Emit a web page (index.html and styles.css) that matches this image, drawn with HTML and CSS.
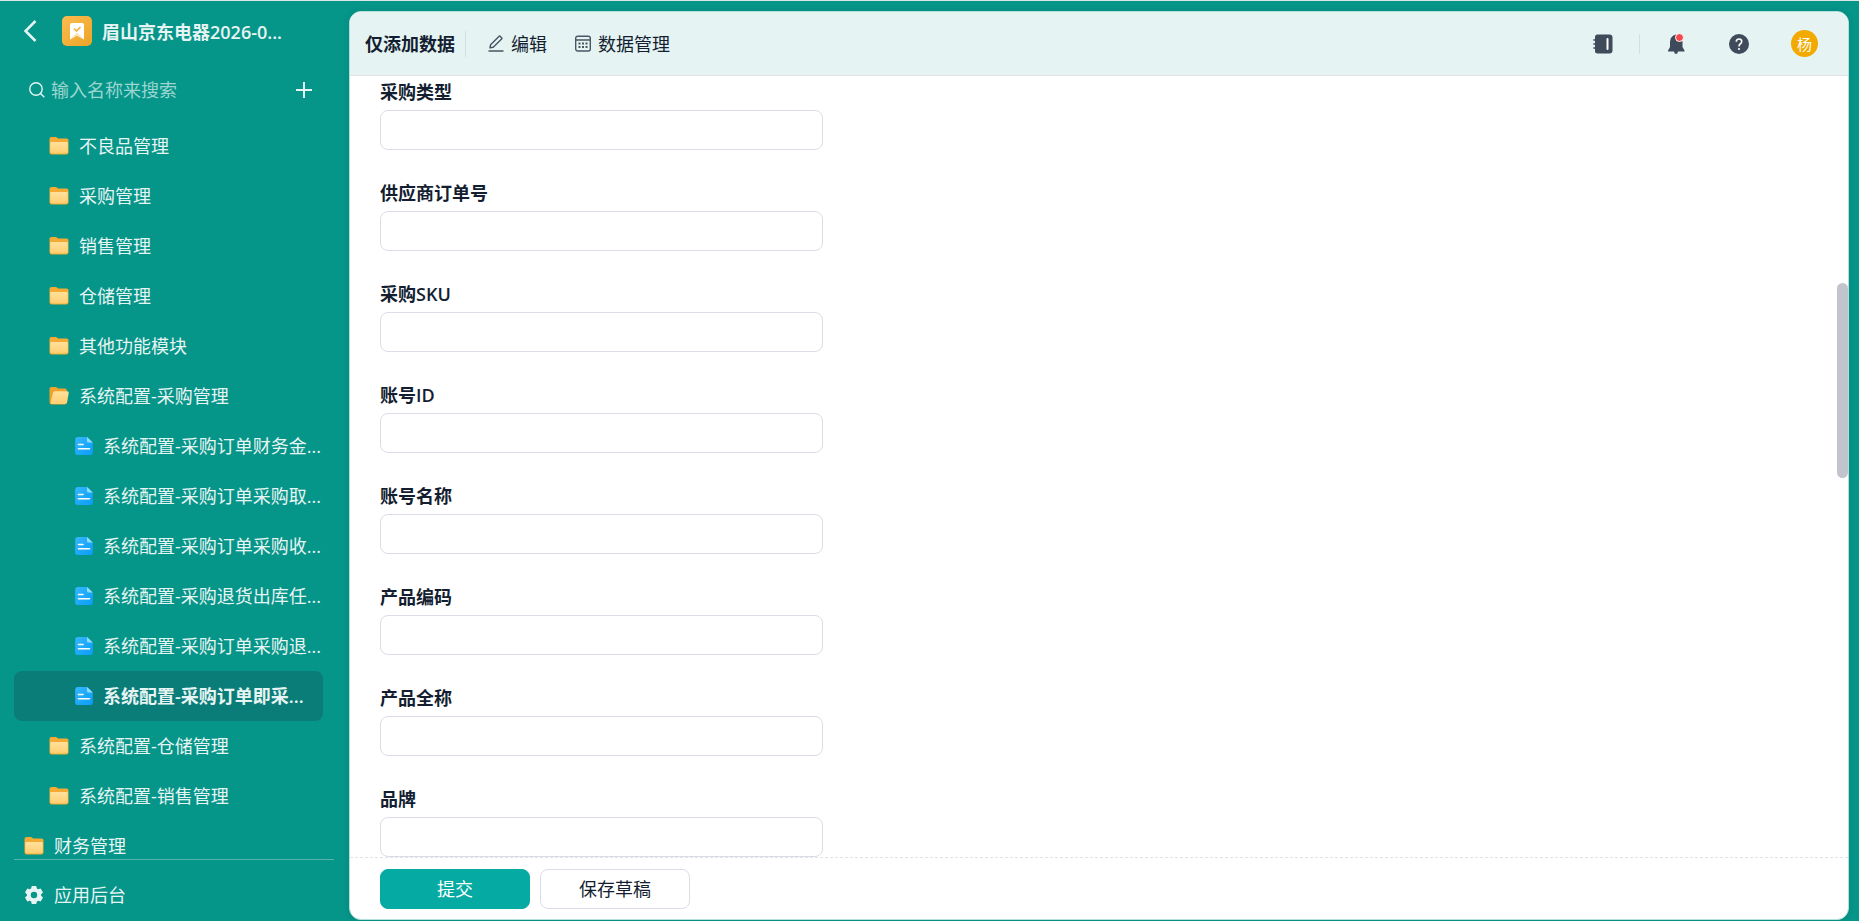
FILE: index.html
```html
<!DOCTYPE html>
<html lang="zh-CN">
<head>
  <meta charset="UTF-8" />
  <meta name="viewport" content="width=device-width, initial-scale=1" />
  <title>眉山京东电器</title>
  <link rel="stylesheet" href="styles.css">
</head>
<body>

  <!-- icons used more than once -->
  <svg class="defs" aria-hidden="true">
    <defs>
      <linearGradient id="folderFill" x1="0" y1="0" x2="0" y2="1">
        <stop offset="0" stop-color="#ffe19c" />
        <stop offset="1" stop-color="#ffcf70" />
      </linearGradient>
      <linearGradient id="docFill" x1="0" y1="0" x2="1" y2="1">
        <stop offset="0" stop-color="#35b8ff" />
        <stop offset="1" stop-color="#0a9cf5" />
      </linearGradient>
      <linearGradient id="logoFill" x1="0" y1="0" x2="1" y2="1">
        <stop offset="0" stop-color="#fbbc4f" />
        <stop offset="1" stop-color="#eca427" />
      </linearGradient>
    </defs>
    <symbol id="folder" viewBox="0 0 20 20">
      <path d="M.5 3Q.5 1 2.5 1H6.500Q7.500 1 8.200 1.700L9.200 2.500H17.500Q19.500 2.500 19.500 4.500V16Q19.500 18.500 17 18.500H3Q.5 18.500 .5 16Z" fill="#f5ab33" />
      <path d="M1.200 7Q1.200 6 2.200 6H17.800Q18.800 6 18.800 7V15.500Q18.800 17.500 16.800 17.500H3.200Q1.200 17.500 1.200 15.500Z" fill="url(#folderFill)" />
    </symbol>
    <symbol id="folder-open" viewBox="0 0 20 20">
      <path d="M.5 3Q.5 1 2.500 1H6.500Q7.500 1 8.200 1.700L9.200 2.500H16Q18 2.500 18 5V17L16 18.500H3Q.5 18.500 .5 16Z" fill="#f0a32c" />
      <path d="M4 7Q4.400 5.200 6 5.200H18.200Q20 5.200 19.700 7L18.200 15.800Q17.800 18 15.500 18H3Q1.200 18 1.700 16Z" fill="url(#folderFill)" />
    </symbol>
    <symbol id="doc" viewBox="0 0 18 20">
      <path d="M2.500 1H12L17.800 6.500V16.500Q17.800 19 15.500 19H2.500Q.2 19 .2 16.500V3.500Q.2 1 2.500 1Z" fill="url(#docFill)" />
      <path d="M12 1L17.800 6.500H13.500Q12 6.500 12 5Z" fill="#8fdcff" />
      <path d="M3.500 8.500H8M3.500 12.700H14.500" stroke="#fff" stroke-width="1.600" stroke-linecap="round" />
    </symbol>
  </svg>

  <div class="app">
    <aside class="sidebar">
      <header class="app-head">
        <button class="icon-btn" type="button" aria-label="返回">
          <svg width="14" height="24" viewBox="0 0 14 24"><path d="M12.500 2L2.500 12L12.500 22" fill="none" stroke="currentColor" stroke-width="2.500" /></svg>
        </button>
        <svg class="logo" width="30" height="30" viewBox="0 0 30 30">
          <rect width="30" height="30" rx="5" fill="url(#logoFill)" />
          <path d="M8 9Q8 7 10 7H20Q22 7 22 9V23.500L15 19.500L8 23.500Z" fill="#fff" />
          <path d="M8 23.500L15 16.500L22 23.500L15 19.500Z" fill="#fbe3b5" />
          <path d="M12 12.500L14.500 15L18.500 11" fill="none" stroke="#f3ae3b" stroke-width="1.600" />
        </svg>
        <h1 class="app-name">眉山京东电器2026-0...</h1>
      </header>

      <div class="search">
        <label class="search-icon" for="navSearch" aria-label="搜索">
          <svg width="16" height="16" viewBox="0 0 16 16" fill="none" stroke="currentColor" stroke-width="1.400"><circle cx="7" cy="7" r="6.200" /><path d="M11.500 11.500L15.300 15.300" /></svg>
        </label>
        <input class="search-input" id="navSearch" type="text" placeholder="输入名称来搜索">
        <button class="icon-btn" type="button" aria-label="添加">
          <svg width="16" height="16" viewBox="0 0 16 16"><path d="M8 0V16M0 8H16" stroke="currentColor" stroke-width="2" /></svg>
        </button>
      </div>

      <nav class="nav">
        <a class="nav-item level-2" href="#"><svg class="folder"><use href="#folder" /></svg>不良品管理</a>
        <a class="nav-item level-2" href="#"><svg class="folder"><use href="#folder" /></svg>采购管理</a>
        <a class="nav-item level-2" href="#"><svg class="folder"><use href="#folder" /></svg>销售管理</a>
        <a class="nav-item level-2" href="#"><svg class="folder"><use href="#folder" /></svg>仓储管理</a>
        <a class="nav-item level-2" href="#"><svg class="folder"><use href="#folder" /></svg>其他功能模块</a>
        <a class="nav-item level-2" href="#"><svg class="folder"><use href="#folder-open" /></svg>系统配置-采购管理</a>
        <a class="nav-item level-3" href="#"><svg class="doc"><use href="#doc" /></svg>系统配置-采购订单财务金...</a>
        <a class="nav-item level-3" href="#"><svg class="doc"><use href="#doc" /></svg>系统配置-采购订单采购取...</a>
        <a class="nav-item level-3" href="#"><svg class="doc"><use href="#doc" /></svg>系统配置-采购订单采购收...</a>
        <a class="nav-item level-3" href="#"><svg class="doc"><use href="#doc" /></svg>系统配置-采购退货出库任...</a>
        <a class="nav-item level-3" href="#"><svg class="doc"><use href="#doc" /></svg>系统配置-采购订单采购退...</a>
        <a class="nav-item level-3 active" href="#" aria-current="page"><svg class="doc"><use href="#doc" /></svg>系统配置-采购订单即采...</a>
        <a class="nav-item level-2" href="#"><svg class="folder"><use href="#folder" /></svg>系统配置-仓储管理</a>
        <a class="nav-item level-2" href="#"><svg class="folder"><use href="#folder" /></svg>系统配置-销售管理</a>
        <a class="nav-item level-1" href="#"><svg class="folder"><use href="#folder" /></svg>财务管理</a>
      </nav>

      <a class="admin-link" href="#">
        <svg class="folder" viewBox="0 0 20 20"><path fill="currentColor" fill-rule="evenodd" d="M7.800 1H12.200L12.900 3.600L14.200 4.300L16.700 3.600L19 7.400L17.100 9.300V10.700L19 12.600L16.700 16.400L14.200 15.700L12.900 16.400L12.200 19H7.800L7.100 16.400L5.800 15.700L3.300 16.400L1 12.600L2.900 10.700V9.300L1 7.400L3.300 3.600L5.800 4.300L7.100 3.600ZM10 6.800A3.200 3.200 0 1 0 10 13.200A3.200 3.200 0 1 0 10 6.800Z" /></svg>应用后台</a>
    </aside>

    <main class="panel">
      <header class="toolbar">
        <h2 class="view-name">仅添加数据</h2>
        <button class="tool" type="button">
          <svg width="16" height="17" viewBox="0 0 16 17" fill="none" stroke="#4b5563" stroke-width="1.400"><path d="M.5 16H15.500" /><path d="M2 12.800L2.600 9.700L10.900 1.400Q11.600 .8 12.300 1.400L13.600 2.700Q14.200 3.400 13.600 4.100L5.200 12.300Z" stroke-linejoin="round" /></svg>
          编辑
        </button>
        <button class="tool" type="button">
          <svg width="16" height="17" viewBox="0 0 16 17"><g fill="none" stroke="#4b5563" stroke-width="1.400"><rect x=".7" y="1.200" width="14.600" height="14.800" rx="2" /><path d="M.7 5H15.300" /></g><path d="M3.500 8.500H12.500M3.500 12H12.500" stroke="#4b5563" stroke-width="2" stroke-dasharray="2 1.500" /></svg>
          数据管理
        </button>

        <div class="toolbar-right">
          <button class="icon-btn book" type="button" aria-label="通讯录">
            <svg width="20" height="20" viewBox="0 0 20 20"><path d="M4.500 .5H16.500Q19.500 .5 19.500 3.500V16.500Q19.500 19.500 16.500 19.500H4.500Q2 19.500 2 17V3Q2 .5 4.500 .5Z" fill="#3f4b5b" /><path d="M.3 6H4M.3 10H4M.3 14H4" stroke="#3f4b5b" stroke-width="1.600" /><path d="M14.500 5V15" stroke="#fff" stroke-width="2" stroke-linecap="round" /></svg>
          </button>
          <button class="icon-btn" type="button" aria-label="通知">
            <svg width="20" height="22" viewBox="0 0 20 22"><path d="M9 1.500Q15.500 3 15.500 9V14L17.500 17.500V18.500H11Q10.500 21 9 21Q7.500 21 7 18.500H1V17.500L3 14V9Q3 3 9 1.500Z" fill="#3f4b5b" /><circle cx="12.500" cy="4.500" r="4" fill="#f5484d" stroke="#fff" stroke-width="1" /></svg>
          </button>
          <button class="icon-btn" type="button" aria-label="帮助">
            <svg width="20" height="20" viewBox="0 0 20 20"><circle cx="10" cy="10" r="10" fill="#3f4b5b" /><path d="M7.300 7.800Q7.300 5 10 5Q12.700 5 12.700 7.500Q12.700 9 11.200 10Q10 10.800 10 12.500" fill="none" stroke="#fff" stroke-width="1.600" /><circle cx="10" cy="15" r="1.100" fill="#fff" /></svg>
          </button>
          <button class="avatar" type="button">杨</button>
        </div>
      </header>

      <form class="form" id="dataForm">
        <div class="field"><label for="f1">采购类型</label><input id="f1" type="text"></div>
        <div class="field"><label for="f2">供应商订单号</label><input id="f2" type="text"></div>
        <div class="field"><label for="f3">采购SKU</label><input id="f3" type="text"></div>
        <div class="field"><label for="f4">账号ID</label><input id="f4" type="text"></div>
        <div class="field"><label for="f5">账号名称</label><input id="f5" type="text"></div>
        <div class="field"><label for="f6">产品编码</label><input id="f6" type="text"></div>
        <div class="field"><label for="f7">产品全称</label><input id="f7" type="text"></div>
        <div class="field"><label for="f8">品牌</label><input id="f8" type="text"></div>
        <div class="scroll-thumb"></div>
      </form>

      <footer class="actions">
        <button class="btn btn-primary" type="submit" form="dataForm">提交</button>
        <button class="btn" type="button">保存草稿</button>
      </footer>
    </main>
  </div>

</body>
</html>
```
FILE: styles.css
```css
* {
  box-sizing: border-box;
}
body {
  margin: 0;
  font-family: "Open Sans", "Noto Sans CJK SC", sans-serif;
  font-size: 18px;
  line-height: 26px;
  color: #141e31;
}
button,
input {
  font: inherit;
  color: inherit;
}
button {
  cursor: pointer;
}
.defs {
  position: absolute;
  width: 0;
  height: 0;
}
.app {
  display: flex;
  height: 100vh;
  padding: 10px 10px 1px 0;
  border-top: 1px solid #dfe5e4;
  background: #069589;
}

/* sidebar */
.sidebar {
  display: flex;
  flex-direction: column;
  flex: 0 0 349px;
  min-width: 0;
  padding: 0 15px 0 14px;
  color: #e6f4f3;
}
.icon-btn {
  display: flex;
  padding: 0;
  border: none;
  background: none;
}
.app-head {
  display: flex;
  align-items: center;
  height: 40px;
  padding-left: 9px;
}
.logo {
  margin: 0 10px 0 25px;
}
.app-name {
  margin: 0;
  padding-top: 2px;
  font-size: 18px;
  font-weight: 600;
}
.search {
  display: flex;
  align-items: center;
  height: 40px;
  margin: 19px 22px 11px 15px;
}
.search-icon {
  display: flex;
}
.search-input {
  flex: 1;
  min-width: 0;
  padding: 0 6px;
  border: none;
  outline: none;
  background: none;
}
.search-input::placeholder {
  color: #9bd5d0;
}
.nav {
  flex: 1;
  min-height: 0;
  overflow: hidden;
  border-bottom: 1px solid #51b5ad;
}
.nav-item,
.admin-link {
  display: flex;
  align-items: center;
  gap: 10px;
  height: 50px;
  color: inherit;
  text-decoration: none;
  white-space: nowrap;
}
.nav-item {
  margin-right: 11px;
  border-radius: 8px;
}
.level-1 {
  padding-left: 10px;
}
.level-2 {
  padding-left: 35px;
}
.level-3 {
  padding-left: 61px;
}
.nav-item.active {
  background: #0b7d78;
  font-weight: 600;
}
.folder {
  flex: none;
  width: 20px;
  height: 20px;
}
.doc {
  flex: none;
  width: 18px;
  height: 20px;
}
.admin-link {
  margin-top: 10px;
  padding-left: 10px;
}

/* main panel */
.panel {
  display: flex;
  flex: 1;
  flex-direction: column;
  min-width: 0;
  overflow: hidden;
  border: 1px solid #b4dfdb;
  border-radius: 12px;
  background: #fff;
  box-shadow: 0 0 6px rgba(0, 0, 0, 0.1);
}
.toolbar {
  display: flex;
  align-items: center;
  flex: 0 0 64px;
  padding: 0 30px 0 15px;
  border-bottom: 1px solid #dfe4e8;
  background: #e5f3f3;
}
.view-name {
  margin: 0 10px 0 0;
  font-size: 18px;
  font-weight: 600;
}
.tool {
  display: flex;
  align-items: center;
  gap: 7px;
  padding: 0;
  border: none;
  background: none;
}
.view-name + .tool {
  margin-right: 28px;
  padding-left: 22px;
  border-left: 1px solid #d3dfe1;
}
.toolbar-right {
  display: flex;
  align-items: center;
  gap: 42px;
  margin-left: auto;
}
.book {
  padding-right: 26px;
  margin-right: -15px;
  border-right: 1px solid #d3dfe1;
}
.avatar {
  width: 27px;
  height: 27px;
  padding: 0;
  border: none;
  border-radius: 50%;
  background: #f2a900;
  color: #fff;
  font-size: 15px;
}
.form {
  position: relative;
  display: flex;
  flex: 1;
  flex-direction: column;
  gap: 30px;
  min-height: 0;
  padding: 3px 30px 0;
  overflow: hidden;
}
.field {
  display: flex;
  flex: none;
  flex-direction: column;
  gap: 5px;
  max-width: 443px;
}
.field label {
  font-weight: 600;
}
.field input {
  height: 40px;
  padding: 0 12px;
  border: 1px solid #dadde6;
  border-radius: 8px;
  background: #fff;
}
.scroll-thumb {
  position: absolute;
  top: 207px;
  right: 0;
  width: 11px;
  height: 25%;
  border-radius: 6px;
  background: #c1c4cd;
}
.actions {
  display: flex;
  gap: 10px;
  padding: 11px 30px 10px;
  border-top: 1px dashed #dfe2e8;
}
.btn {
  width: 150px;
  height: 40px;
  border: 1px solid #dadde6;
  border-radius: 8px;
  background: #fff;
}
.btn-primary {
  border-color: #05aba2;
  background: #05aba2;
  color: #fff;
}
```
